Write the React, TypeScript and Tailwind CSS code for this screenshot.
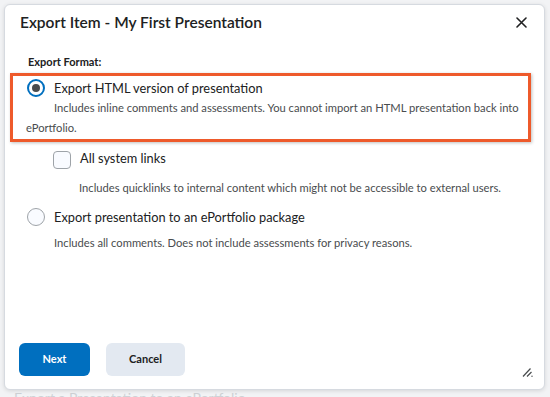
import React from "react";

export default function App() {
  return (
    <div
      className="w-[550px] h-[397px] bg-[#f2f3f5] overflow-hidden relative"
      style={{ fontFamily: "Lato, 'Open Sans', sans-serif" }}
    >
      <div className="absolute left-[14px] top-[390px] text-[14px] leading-[16px] text-[#cfd2d6] whitespace-nowrap">
        Export a Presentation to an ePortfolio
      </div>
      <div className="absolute left-[4px] top-[4px] w-[541px] h-[386px] bg-white rounded-[6px] border border-[#d6dae0] shadow-[0_1px_4px_rgba(0,0,0,0.12)] flex flex-col">
        <div className="flex items-start justify-between pl-[15px] pr-[17px] pt-[7px]">
          <h1 className="text-[15.5px] leading-[20px] text-[#202122] font-semibold">
            Export Item - My First Presentation
          </h1>
          <button className="mt-[5px]" aria-label="Close">
            <svg width="11" height="11" viewBox="0 0 11 11" className="block">
              <path d="M1 1L10 10M10 1L1 10" stroke="#202122" strokeWidth="1.6" strokeLinecap="round" />
            </svg>
          </button>
        </div>

        <div className="pl-[23px] mt-[23px] text-[11px] font-bold text-[#202122] leading-[14px]">
          Export Format:
        </div>

        <div className="ml-[5px] mr-[13px] mt-[4px] border-[3px] border-[#ee5a2b] shadow-[1px_1px_3px_rgba(0,0,0,0.25)] pl-[14px] pr-[8px] pt-[3px] pb-[1px]">
          <div className="flex items-center gap-[9px]">
            <span className="w-[18px] h-[18px] rounded-full border-2 border-[#006fbf] flex items-center justify-center shrink-0">
              <span className="w-[8px] h-[8px] rounded-full bg-[#494c4e]" />
            </span>
            <span className="text-[12.8px] text-[#202122] leading-[18px]">
              Export HTML version of presentation
            </span>
          </div>
          <p className="mt-[1px] -ml-[1px] text-[11.2px] leading-[20px] text-[#494c4e] indent-[28px]">
            Includes inline comments and assessments. You cannot import an HTML presentation back into ePortfolio.
          </p>
        </div>

        <div className="pl-[48px] mt-[9px] flex items-start gap-[9px]">
          <span className="w-[18px] h-[18px] rounded-[4px] border border-[#9ea3a8] bg-[#f9fbff] shrink-0" />
          <span className="text-[12.8px] text-[#202122] leading-[15px]">All system links</span>
        </div>
        <p className="pl-[74px] mt-[11px] text-[11.2px] leading-[16px] text-[#494c4e]">
          Includes quicklinks to internal content which might not be accessible to external users.
        </p>

        <div className="pl-[22px] mt-[12px] flex items-start gap-[9px]">
          <span className="w-[18px] h-[18px] rounded-full border border-[#9ea3a8] bg-[#f9fbff] shrink-0" />
          <span className="text-[12.8px] text-[#202122] leading-[15px] mt-[2px]">
            Export presentation to an ePortfolio package
          </span>
        </div>
        <p className="pl-[49px] mt-[9px] text-[11.2px] leading-[16px] text-[#494c4e]">
          Includes all comments. Does not include assessments for privacy reasons.
        </p>

        <div className="mt-auto pl-[14px] pb-[13px] flex items-center gap-[16px]">
          <button className="w-[71px] h-[33px] rounded-[6px] bg-[#006fbf] text-white text-[11px] font-bold">
            Next
          </button>
          <button className="w-[79px] h-[33px] rounded-[6px] bg-[#e3e9f1] text-[#202122] text-[11px] font-bold">
            Cancel
          </button>
        </div>

        <svg className="absolute right-[11px] bottom-[12px]" width="11" height="10" viewBox="0 0 11 10">
          <path d="M1 9.5L8.5 1.5M5 9.5L9.5 5" stroke="#494c4e" strokeWidth="1.2" />
          <circle cx="10" cy="9.3" r="0.7" fill="#494c4e" />
        </svg>
      </div>
    </div>
  );
}
